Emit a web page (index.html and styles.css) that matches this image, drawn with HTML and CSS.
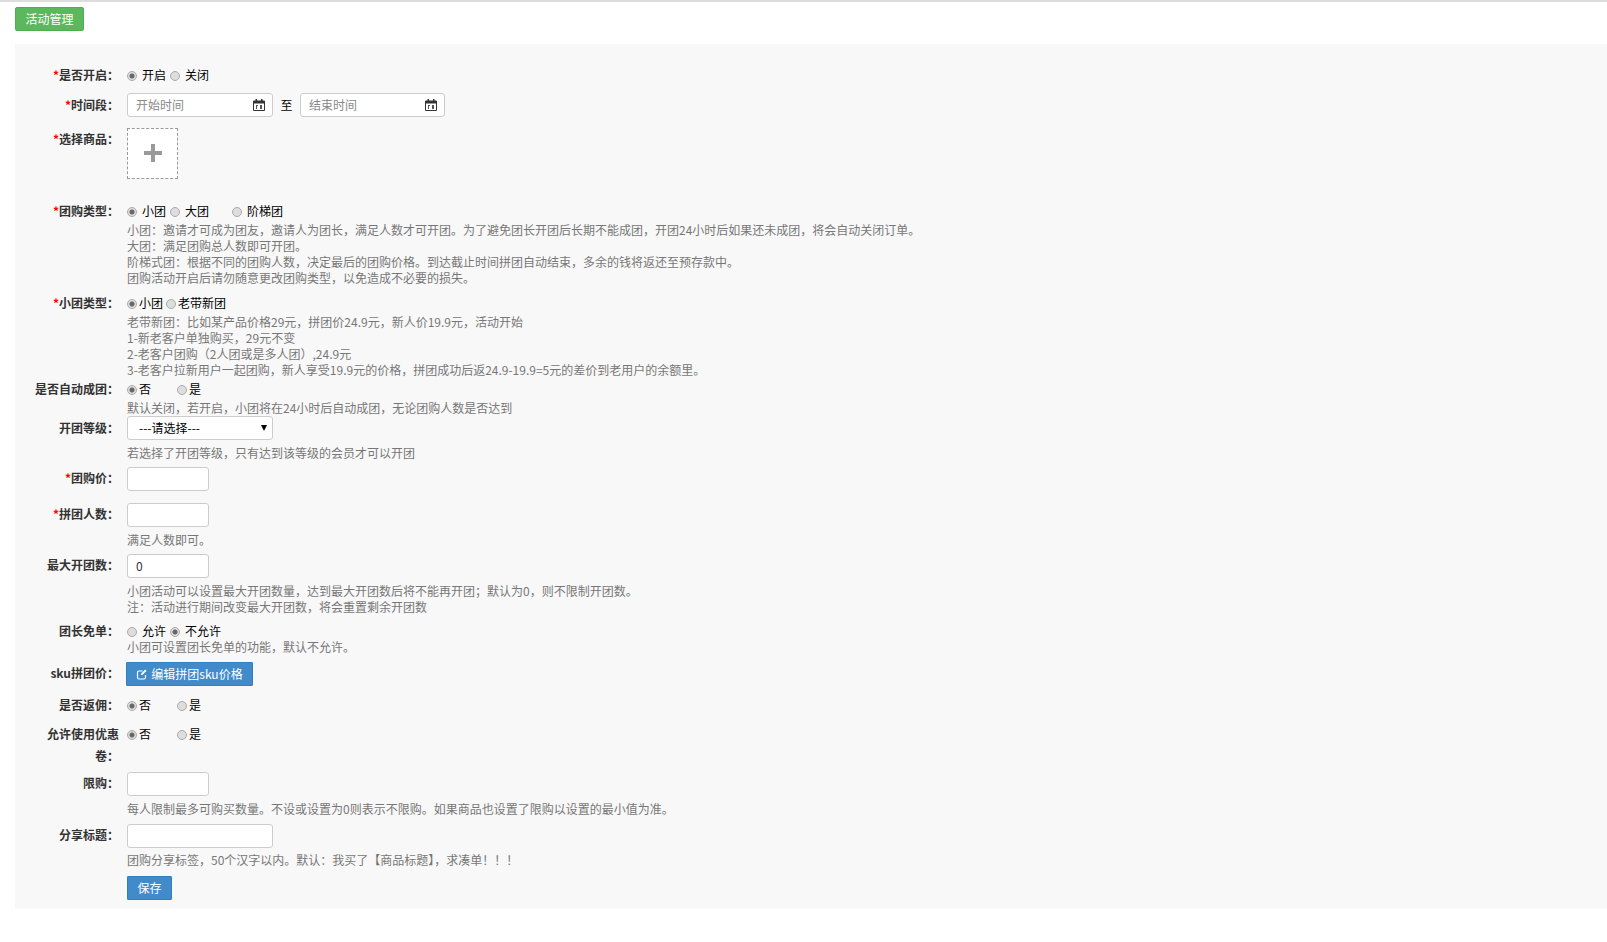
FILE: index.html
```html
<!DOCTYPE html>
<html lang="zh-CN">

<head>
  <meta charset="utf-8" />
  <title>活动管理</title>
  <link rel="stylesheet" href="styles.css">
</head>

<body>
  <div class="top-line"></div>
  <a class="tab-btn">活动管理</a>

  <form class="panel">
    <div class="row">
      <label class="name"><span class="star">*</span>是否开启：</label>
      <div class="field">
        <div class="radios">
          <label class="radio"><input type="radio" name="open" checked>开启</label>
          <label class="radio"><input type="radio" name="open">关闭</label>
        </div>
      </div>
    </div>

    <div class="row gap-7 has-input">
      <label class="name"><span class="star">*</span>时间段：</label>
      <div class="field dates">
        <div class="date-box">
          <input class="input date" type="text" placeholder="开始时间">
          <svg class="cal" viewBox="0 0 12 12"><path d="M0.5 2h11v9.5h-11z" fill="none" stroke="#333"/><path d="M0 2h12v2.5H0zM2.5 0h1.500v2.500H2.500zM8 0h1.500v2.500H8z" fill="#333"/><path d="M3 6h2v1H4v3H3zM7 6h2v4H7z" fill="#555"/></svg>
        </div>
        <span class="to">至</span>
        <div class="date-box">
          <input class="input date" type="text" placeholder="结束时间">
          <svg class="cal" viewBox="0 0 12 12"><path d="M0.5 2h11v9.5h-11z" fill="none" stroke="#333"/><path d="M0 2h12v2.5H0zM2.5 0h1.500v2.500H2.500zM8 0h1.500v2.500H8z" fill="#333"/><path d="M3 6h2v1H4v3H3zM7 6h2v4H7z" fill="#555"/></svg>
        </div>
      </div>
    </div>

    <div class="row gap-11 has-input">
      <label class="name name-up"><span class="star">*</span>选择商品：</label>
      <div class="field">
        <div class="pick">
          <svg width="18" height="18" viewBox="0 0 18 18"><path d="M7 0h4v7h7v4h-7v7H7v-7H0V7h7z" fill="#9a9a9a"/></svg>
        </div>
      </div>
    </div>

    <div class="row gap-21">
      <label class="name"><span class="star">*</span>团购类型：</label>
      <div class="field">
        <div class="radios">
          <label class="radio"><input type="radio" name="kind" checked>小团</label>
          <label class="radio"><input type="radio" name="kind">大团</label>
          <label class="radio far"><input type="radio" name="kind">阶梯团</label>
        </div>
        <p class="help">小团：邀请才可成为团友，邀请人为团长，满足人数才可开团。为了避免团长开团后长期不能成团，开团24小时后如果还未成团，将会自动关闭订单。</p>
        <p class="help">大团：满足团购总人数即可开团。</p>
        <p class="help">阶梯式团：根据不同的团购人数，决定最后的团购价格。到达截止时间拼团自动结束，多余的钱将返还至预存款中。</p>
        <p class="help">团购活动开启后请勿随意更改团购类型，以免造成不必要的损失。</p>
      </div>
    </div>

    <div class="row gap-6">
      <label class="name"><span class="star">*</span>小团类型：</label>
      <div class="field">
        <div class="radios tight">
          <label class="radio"><input type="radio" name="small" checked>小团</label>
          <label class="radio"><input type="radio" name="small">老带新团</label>
        </div>
        <p class="help">老带新团：比如某产品价格29元，拼团价24.9元，新人价19.9元，活动开始</p>
        <p class="help">1-新老客户单独购买，29元不变</p>
        <p class="help">2-老客户团购（2人团或是多人团）,24.9元</p>
        <p class="help">3-老客户拉新用户一起团购，新人享受19.9元的价格，拼团成功后返24.9-19.9=5元的差价到老用户的余额里。</p>
      </div>
    </div>

    <div class="row">
      <label class="name">是否自动成团：</label>
      <div class="field">
        <div class="radios tight wide">
          <label class="radio"><input type="radio" name="auto" checked>否</label>
          <label class="radio"><input type="radio" name="auto">是</label>
        </div>
        <p class="help">默认关闭，若开启，小团将在24小时后自动成团，无论团购人数是否达到</p>
      </div>
    </div>

    <div class="row has-input">
      <label class="name">开团等级：</label>
      <div class="field">
        <div class="select-box">
          <select class="input select">
            <option>---请选择---</option>
          </select>
        </div>
        <p class="help after-input">若选择了开团等级，只有达到该等级的会员才可以开团</p>
      </div>
    </div>

    <div class="row gap-6 has-input">
      <label class="name name-up"><span class="star">*</span>团购价：</label>
      <div class="field"><input class="input short" type="text"></div>
    </div>

    <div class="row gap-12 has-input">
      <label class="name name-up"><span class="star">*</span>拼团人数：</label>
      <div class="field">
        <input class="input short" type="text">
        <p class="help after-input">满足人数即可。</p>
      </div>
    </div>

    <div class="row gap-6 has-input">
      <label class="name name-up">最大开团数：</label>
      <div class="field">
        <input class="input short" type="text" value="0">
        <p class="help after-input">小团活动可以设置最大开团数量，达到最大开团数后将不能再开团；默认为0，则不限制开团数。</p>
        <p class="help">注：活动进行期间改变最大开团数，将会重置剩余开团数</p>
      </div>
    </div>

    <div class="row gap-5">
      <label class="name">团长免单：</label>
      <div class="field">
        <div class="radios">
          <label class="radio"><input type="radio" name="free">允许</label>
          <label class="radio"><input type="radio" name="free" checked>不允许</label>
        </div>
        <p class="help pull-up">小团可设置团长免单的功能，默认不允许。</p>
      </div>
    </div>

    <div class="row gap-7 has-input">
      <label class="name name-up">sku拼团价：</label>
      <div class="field">
        <a class="btn btn-edit">
          <svg width="12" height="12" viewBox="0 0 12 12"><path d="M9.500 7v2.500a1.500 1.500 0 0 1-1.500 1.500H3a1.500 1.500 0 0 1-1.500-1.500V4.500A1.500 1.500 0 0 1 3 3h3.500" fill="none" stroke="#fff" stroke-width="1.200"/><path d="M5 5.800L9.200 1.600l1.300 1.300L6.300 7.100H5z" fill="#fff"/></svg>
          编辑拼团sku价格
        </a>
      </div>
    </div>

    <div class="row gap-8">
      <label class="name">是否返佣：</label>
      <div class="field">
        <div class="radios tight wide">
          <label class="radio"><input type="radio" name="back" checked>否</label>
          <label class="radio"><input type="radio" name="back">是</label>
        </div>
      </div>
    </div>

    <div class="row gap-7">
      <label class="name">允许使用优惠卷：</label>
      <div class="field">
        <div class="radios tight wide">
          <label class="radio"><input type="radio" name="coupon" checked>否</label>
          <label class="radio"><input type="radio" name="coupon">是</label>
        </div>
      </div>
    </div>

    <div class="row gap-5 has-input">
      <label class="name name-up">限购：</label>
      <div class="field">
        <input class="input short" type="text">
        <p class="help after-input">每人限制最多可购买数量。不设或设置为0则表示不限购。如果商品也设置了限购以设置的最小值为准。</p>
      </div>
    </div>

    <div class="row gap-7 has-input">
      <label class="name name-up">分享标题：</label>
      <div class="field">
        <input class="input long" type="text">
        <p class="help after-title">团购分享标签，50个汉字以内。默认：我买了【商品标题】，求凑单！！！</p>
        <a class="btn btn-save">保存</a>
      </div>
    </div>
  </form>
</body>

</html>
```

FILE: styles.css
```css
* {
  box-sizing: border-box;
}

body {
  margin: 0;
  background: #fff;
  color: #333;
  font: normal 12px/22px "Noto Sans CJK SC", "Liberation Sans", sans-serif;
}

p {
  margin: 0;
}

.top-line {
  height: 2px;
  background: #ddd;
}

.tab-btn {
  display: block;
  width: 69px;
  height: 24px;
  margin: 5px 0 0 15px;
  background: #5cb85c;
  border: solid 1px #4cae4c;
  border-radius: 2px;
  color: #fff;
  line-height: 22px;
  text-align: center;
}

.panel {
  margin: 13px 0 0 15px;
  padding: 20px 0 9px;
  background: #f8f8f8;
}

.row {
  display: flex;
}

.gap-5 { margin-top: 5px; }
.gap-6 { margin-top: 6px; }
.gap-7 { margin-top: 7px; }
.gap-8 { margin-top: 8px; }
.gap-11 { margin-top: 11px; }
.gap-12 { margin-top: 12px; }
.gap-21 { margin-top: 21px; }

.name {
  flex: none;
  width: 104px;
  padding-left: 14px;
  font-weight: bold;
  text-align: right;
}

.has-input .name {
  padding-top: 1px;
}

.has-input .name-up {
  padding-top: 0;
}

.star {
  color: #f00;
}

.field {
  margin-left: 8px;
  min-width: 0;
}

.radios {
  display: flex;
  gap: 4px;
  color: #000;
}

.radio {
  display: flex;
  align-items: center;
}

.radio input {
  appearance: none;
  width: 10px;
  height: 10px;
  margin: 1px 5px 0 0;
  border: solid 1px #aaa;
  border-radius: 50%;
  background: #ddd;
}

.radio input:checked {
  background: radial-gradient(circle, #666 0, #666 2px, #ddd 3px);
}

.radio.far {
  margin-left: 19px;
}

.tight {
  gap: 3px;
}

.tight input {
  margin-right: 2px;
}

.wide {
  gap: 26px;
}

.help {
  color: #777;
  line-height: 16px;
  white-space: nowrap;
}

.after-input {
  margin-top: 5px;
}

.after-title {
  margin-top: 4px;
}

.pull-up {
  margin-top: -3px;
}

.input {
  display: block;
  height: 24px;
  padding: 0 8px 1px;
  background: #fff;
  border: solid 1px #ccc;
  border-radius: 3px;
  color: #333;
  font: inherit;
  outline: none;
}

.input::placeholder {
  color: #888;
}

.short {
  width: 82px;
}

.long {
  width: 146px;
}

.dates {
  display: flex;
  align-items: center;
}

.date-box {
  position: relative;
}

.date {
  width: 145px;
}

.date-box:first-child .date {
  width: 146px;
}

.cal {
  position: absolute;
  top: 6px;
  right: 8px;
  width: 12px;
  height: 12px;
}

.to {
  width: 27px;
  color: #000;
  text-align: center;
}

.pick {
  display: flex;
  align-items: center;
  justify-content: center;
  width: 51px;
  height: 51px;
  padding-bottom: 1px;
  background: #fff;
  border: dashed 1px #999;
}

.select-box {
  position: relative;
  width: 146px;
}

.select {
  width: 100%;
  padding-left: 11px;
  appearance: none;
  color: #000;
}

.select-box::after {
  content: "";
  position: absolute;
  top: 9px;
  right: 6px;
  border: solid 3px transparent;
  border-top: solid 6px #000;
  border-bottom: 0;
}

.btn {
  display: flex;
  align-items: center;
  justify-content: center;
  height: 24px;
  background: #428bca;
  border: solid 1px #357ebd;
  border-radius: 1px;
  color: #fff;
}

.btn-edit {
  width: 127px;
  margin-left: -1px;
  gap: 3px;
}

.btn-save {
  width: 45px;
  margin-top: 8px;
}
```
